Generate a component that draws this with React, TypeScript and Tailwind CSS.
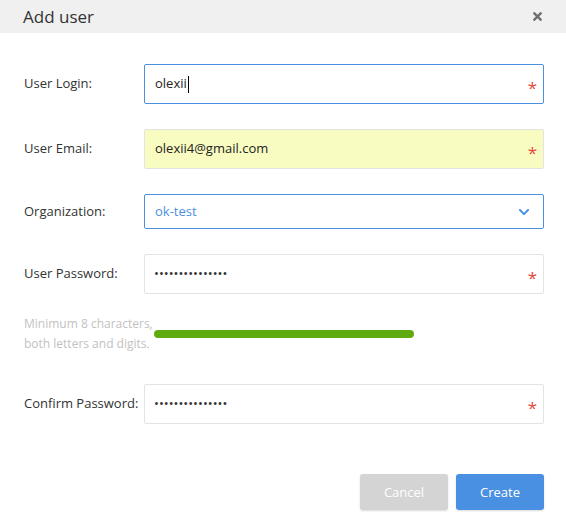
import { FaTimes, FaChevronDown } from "react-icons/fa";

const font = { fontFamily: '"Open Sans", sans-serif' };

function Asterisk() {
  return (
    <span className="absolute right-[6px] top-[14px] text-[17px] leading-[17px] text-[#e5483c]">*</span>
  );
}

function Row({ label, children }: { label: string; children: React.ReactNode }) {
  return (
    <div className="flex items-center">
      <div className="w-[120px] text-[13px] text-[#333]">{label}</div>
      {children}
    </div>
  );
}

export default function App() {
  return (
    <div className="w-[566px] h-[532px] bg-white" style={font}>
      {/* header */}
      <div className="h-[33px] bg-[#f0f0f0] flex items-center justify-between pl-[23px] pr-[22px]">
        <span className="text-[17px] text-[#333]">Add user</span>
        <FaTimes className="text-[#6f6f6f] w-[13px] h-[13px]" />
      </div>

      <div className="pl-[24px] pr-[22px] pt-[31px] flex flex-col">
        <Row label="User Login:">
          <div className="relative w-[400px] h-[40px] border border-[#4a90e2] rounded-[2px] flex items-center px-[10px] text-[13px] text-[#222]">
            olexii
            <span className="inline-block w-px h-[17px] bg-black ml-px" />
            <Asterisk />
          </div>
        </Row>

        <div className="mt-[25px]">
          <Row label="User Email:">
            <div className="relative w-[400px] h-[40px] border border-[#e3e3e3] bg-[#f9fcc1] rounded-[2px] flex items-center px-[10px] text-[13px] text-[#222]">
              olexii4@gmail.com
              <Asterisk />
            </div>
          </Row>
        </div>

        <div className="mt-[25px]">
          <Row label="Organization:">
            <div className="w-[400px] h-[35px] border border-[#4a90e2] rounded-[2px] flex items-center justify-between pl-[10px] pr-[13px] text-[13px] text-[#4a90e2]">
              ok-test
              <FaChevronDown className="w-[12px] h-[12px]" />
            </div>
          </Row>
        </div>

        <div className="mt-[25px]">
          <Row label="User Password:">
            <div className="relative w-[400px] h-[40px] border border-[#e3e3e3] rounded-[2px] flex items-center px-[9px] text-[13px] text-[#333]">
              •••••••••••••••
              <Asterisk />
            </div>
          </Row>
        </div>

        <div className="mt-[20px] flex items-center">
          <div className="w-[130px] text-[12px] leading-[20px] text-[#c2c2c2]">
            Minimum 8 characters, both letters and digits.
          </div>
          <div className="w-[260px] h-[8px] rounded-full bg-[#5faa0f]" />
        </div>

        <div className="mt-[30px]">
          <Row label="Confirm Password:">
            <div className="relative w-[400px] h-[40px] border border-[#e3e3e3] rounded-[2px] flex items-center px-[9px] text-[13px] text-[#333]">
              •••••••••••••••
              <Asterisk />
            </div>
          </Row>
        </div>

        <div className="mt-[50px] flex justify-end gap-[8px]">
          <button className="w-[88px] h-[36px] rounded-[3px] bg-[#d4d4d4] text-white text-[13px] pt-px shadow-[0_1px_2px_rgba(0,0,0,0.15)]">
            Cancel
          </button>
          <button className="w-[88px] h-[36px] rounded-[3px] bg-[#4a90e2] text-white text-[13px] pt-px shadow-[0_1px_2px_rgba(0,0,0,0.15)]">
            Create
          </button>
        </div>
      </div>
    </div>
  );
}
